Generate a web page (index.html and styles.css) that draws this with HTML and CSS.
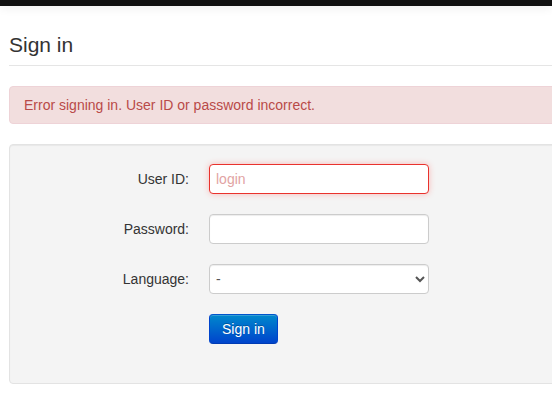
FILE: index.html
```html
<!DOCTYPE html>
<html lang="en">
<head>
<meta charset="utf-8">
<title>Sign in</title>
<link rel="stylesheet" href="styles.css">
</head>
<body>
<div class="topbar"></div>
<div class="container">
  <div class="page-header">
    <h1>Sign in</h1>
  </div>
  <div class="alert">Error signing in. User ID or password incorrect.</div>
  <form class="well">
    <div class="control-group">
      <label class="control-label" for="login">User ID:</label>
      <div class="controls"><input id="login" class="input error" type="text" placeholder="login" autofocus></div>
    </div>
    <div class="control-group">
      <label class="control-label" for="password">Password:</label>
      <div class="controls"><input id="password" class="input" type="password"></div>
    </div>
    <div class="control-group">
      <label class="control-label" for="lang">Language:</label>
      <div class="controls">
        <select id="lang" class="input select">
          <option>-</option>
          <option>English</option>
        </select>
      </div>
    </div>
    <div class="control-group">
      <div class="controls"><button type="button" class="btn">Sign in</button></div>
    </div>
  </form>
</div>
</body>
</html>
```
FILE: styles.css
```css
html, body {
  margin: 0;
  padding: 0;
  overflow-x: hidden;
  background: #fff;
}
body {
  font-family: "Liberation Sans", Arial, sans-serif;
  font-size: 14px;
  line-height: 20px;
  color: #333;
}
.topbar {
  height: 6px;
  background: #111;
  box-shadow: 0 2px 10px rgba(0, 0, 0, 0.08);
}
.container {
  width: 940px;
  margin-left: 9px;
}
.page-header {
  margin-top: 26px;
  padding-bottom: 7px;
  border-bottom: 1px solid #e5e5e5;
  margin-bottom: 20px;
}
.page-header h1 {
  margin: 0;
  font-size: 21px;
  line-height: 26px;
  font-weight: normal;
  color: #333;
}
.alert {
  padding: 8px 35px 8px 14px;
  background: #f2dede;
  border: 1px solid #eed3d7;
  border-radius: 4px;
  color: #b94a48;
  margin-bottom: 20px;
}
.well {
  display: block;
  margin: 0;
  padding: 19px;
  background: #f4f4f4;
  border: 1px solid #e3e3e3;
  border-radius: 4px;
  box-shadow: inset 0 1px 1px rgba(0, 0, 0, 0.05);
}
.control-group {
  display: flex;
  margin-bottom: 20px;
}
.control-label {
  width: 160px;
  padding-top: 5px;
  text-align: right;
  flex: none;
}
.controls {
  margin-left: 20px;
}
.control-group:last-child .controls {
  margin-left: 180px;
}
.input {
  box-sizing: border-box;
  width: 220px;
  height: 30px;
  padding: 4px 6px;
  margin: 0;
  font-family: "Liberation Sans", Arial, sans-serif;
  font-size: 14px;
  line-height: 20px;
  color: #555;
  background: #fff;
  border: 1px solid #ccc;
  border-radius: 4px;
  box-shadow: inset 0 1px 1px rgba(0, 0, 0, 0.075);
  outline: none;
  display: block;
}
.input.error {
  border-color: #e9322d;
  box-shadow: 0 0 6px #f8b9b7;
  caret-color: #b94a48;
}
.input.error::placeholder {
  color: #e2a3a3;
}
.select {
  padding: 4px 2px;
}
.btn {
  height: 30px;
  padding: 4px 12px;
  font-family: "Liberation Sans", Arial, sans-serif;
  font-size: 14px;
  line-height: 20px;
  color: #fff;
  background: linear-gradient(to bottom, #0088cc, #0044cc);
  border: 1px solid #0044cc;
  border-color: #0055cc #0044cc #003bb3;
  border-radius: 4px;
  text-shadow: 0 -1px 0 rgba(0, 0, 0, 0.25);
  box-shadow: inset 0 1px 0 rgba(255, 255, 255, 0.2);
  cursor: pointer;
}
```
